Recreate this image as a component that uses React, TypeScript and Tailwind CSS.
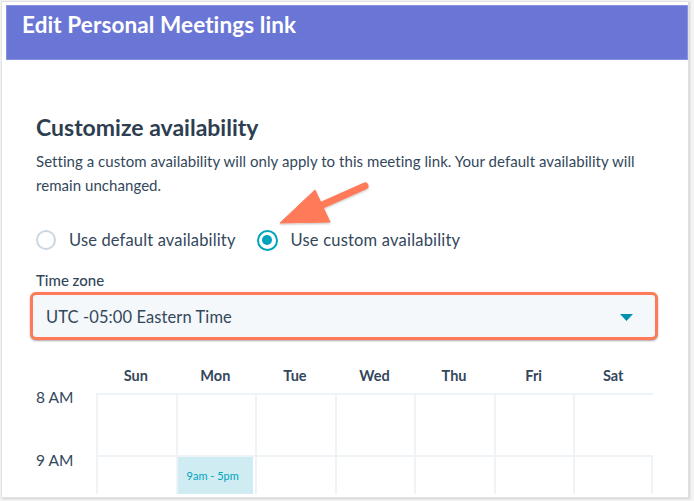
import React from "react";

const days = ["Sun", "Mon", "Tue", "Wed", "Thu", "Fri", "Sat"];

export default function App() {
  return (
    <div
      className="w-[694px] h-[501px] bg-[#f4f4f4] overflow-hidden text-[#33475b]"
      style={{ fontFamily: "Lato, 'Open Sans', sans-serif" }}
    >
      <div className="ml-[1px] mt-[1px] w-[688px] h-[497px] bg-white border border-[#e2e2e2] shadow-[1px_1px_2px_rgba(0,0,0,0.15)] pt-[3px] pl-[4px] flex flex-col">
        <div className="w-[682px] h-[55px] shrink-0 bg-[#6a76d5] border border-[#8891e2] pl-[15px] pt-[4px]">
          <div className="text-white text-[22.5px] leading-[30px] font-bold tracking-[0.1px]">Edit Personal Meetings link</div>
        </div>

        <div className="pl-[30px] pr-[30px] pt-[53px] relative flex-1">
          <div className="text-[23px] font-bold leading-[28px] text-[#2d3e50]">Customize availability</div>
          <p className="mt-[8px] text-[15px] leading-[24px] tracking-[0.05px] text-[#33475b]">
            Setting a custom availability will only apply to this meeting link. Your default availability will remain unchanged.
          </p>

          <div className="mt-[30px] flex items-center h-[26px]">
            <span className="w-[20px] h-[20px] rounded-full border-2 border-[#cbd6e2] bg-white" />
            <span className="ml-[13px] text-[16.5px] tracking-[0.15px]">Use default availability</span>
            <span className="ml-[21px] w-[21px] h-[21px] rounded-full border-[2.5px] border-[#00a4bd] bg-white flex items-center justify-center">
              <span className="w-[10px] h-[10px] rounded-full bg-[#00a4bd]" />
            </span>
            <span className="ml-[13px] text-[16.5px] tracking-[0.2px]">Use custom availability</span>
          </div>

          <div className="mt-[17px] text-[15px] font-medium leading-[20px]">Time zone</div>

          <div className="mt-[2px] -ml-[6px] w-[628px] h-[48px] rounded-[6px] border-[3px] border-[#ff7a59] shadow-[0_1px_2px_rgba(0,0,0,0.35)] bg-[#f5f8fa] flex items-center pl-[13px] pr-[22px] pt-[2px]">
            <span className="text-[16.5px] tracking-[0.1px] flex-1">UTC -05:00 Eastern Time</span>
            <svg width="13" height="7" viewBox="0 0 13 7">
              <path d="M0 0 L13 0 L6.5 7 Z" fill="#0091ae" />
            </svg>
          </div>

          <div className="mt-[29px] flex">
            <div className="w-[60px] flex flex-col text-[15.5px]">
              <div className="h-[19px]" />
              <div className="h-[63px] leading-[18px]">8 AM</div>
              <div className="leading-[18px]">9 AM</div>
            </div>
            <div className="w-[557px] flex flex-col">
              <div className="grid grid-cols-7 h-[24px]">
                {days.map((d) => (
                  <div key={d} className="text-center text-[14.5px] font-bold leading-[14px]">
                    {d}
                  </div>
                ))}
              </div>
              <div className="grid grid-cols-7 border-t-2 border-[#eef3f8]">
                {days.map((d) => (
                  <div key={d} className="h-[62px] border-l-2 border-b-2 border-[#eef3f8] last:border-r-2" />
                ))}
                {days.map((d) => (
                  <div key={d + "2"} className="h-[37px] border-l-2 border-[#eef3f8] last:border-r-2">
                    {d === "Mon" && (
                      <div className="w-[75px] h-[37px] bg-[#cfecf3] text-[11px] text-[#00a4bd] pl-[9px] pt-[11px]">
                        9am - 5pm
                      </div>
                    )}
                  </div>
                ))}
              </div>
            </div>
          </div>

          <svg className="absolute left-[262px] top-[118px]" width="110" height="55" viewBox="0 0 110 55">
            <defs>
              <filter id="sh" x="-20%" y="-20%" width="140%" height="140%">
                <feDropShadow dx="0" dy="1" stdDeviation="0.8" floodColor="#000" floodOpacity="0.25" />
              </filter>
            </defs>
            <g filter="url(#sh)">
              <line x1="97" y1="8" x2="52" y2="28" stroke="#ff7a59" strokeWidth="7" strokeLinecap="round" />
              <path d="M12 45 L47 12 L62 44 Z" fill="#ff7a59" strokeLinejoin="round" stroke="#ff7a59" strokeWidth="1" />
            </g>
          </svg>
        </div>
      </div>
    </div>
  );
}
